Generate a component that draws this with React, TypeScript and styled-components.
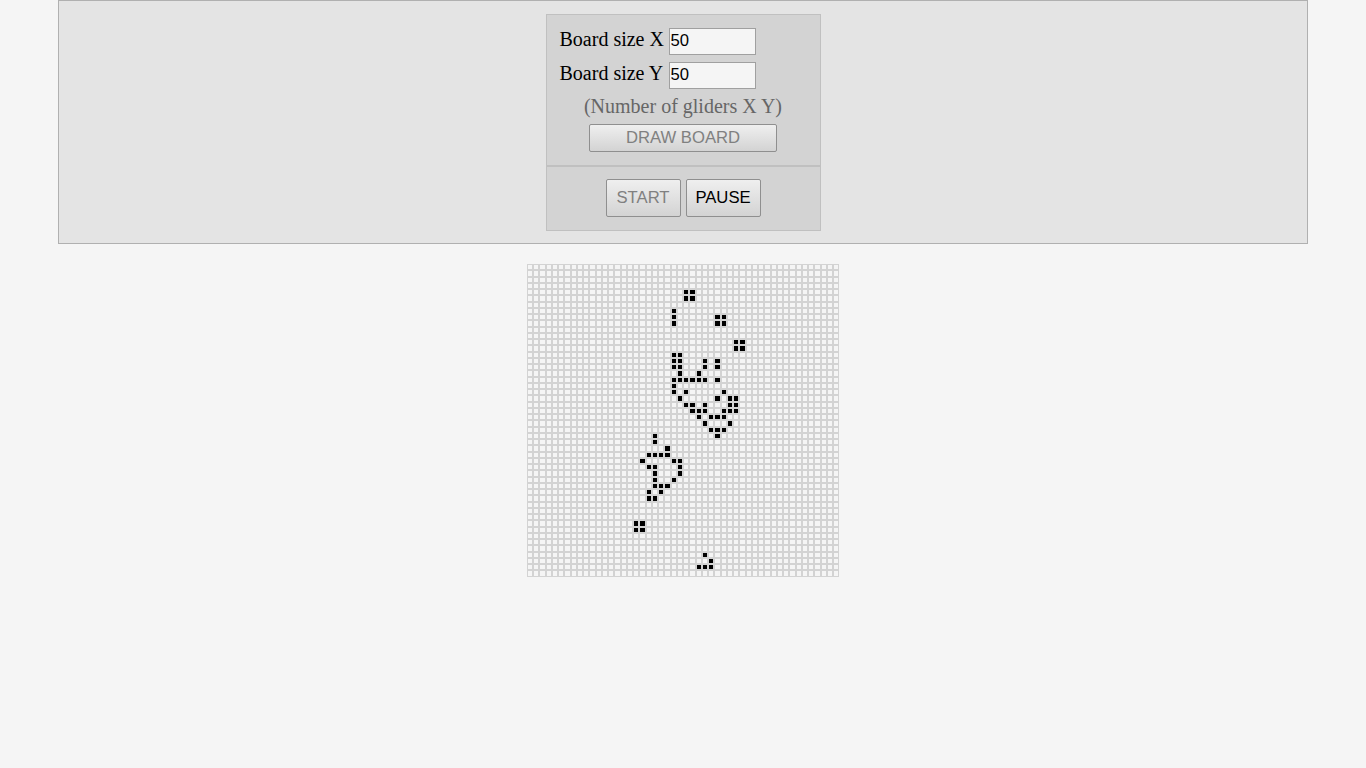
import React, { useState } from "react";
import styled, { createGlobalStyle } from "styled-components";

const SIZE = 50;

/* Row number -> columns of the living cells in that row. */
const LIVE: Record<number, number[]> = {
  4: [25, 26],
  5: [25, 26],
  7: [23],
  8: [23, 30, 31],
  9: [23, 30, 31],
  12: [33, 34],
  13: [33, 34],
  14: [23, 24],
  15: [23, 24, 28, 30],
  16: [23, 24, 28, 30],
  17: [24, 27],
  18: [23, 24, 25, 26, 27, 28, 30],
  19: [23],
  20: [23, 25, 31],
  21: [24, 30, 32, 33],
  22: [25, 26, 28, 32, 33],
  23: [26, 27, 28, 31, 32, 33],
  24: [27, 29, 30, 31],
  25: [28, 32],
  26: [29, 30, 31],
  27: [20, 30],
  28: [20],
  29: [22],
  30: [19, 20, 21, 22],
  31: [18, 23, 24],
  32: [19, 20, 24],
  33: [20, 24],
  34: [20, 23],
  35: [20, 21, 22],
  36: [19, 21],
  37: [19, 20],
  41: [17, 18],
  42: [17, 18],
  46: [28],
  47: [29],
  48: [27, 28, 29],
};

const GlobalStyle = createGlobalStyle`
  *, *::before, *::after {
    box-sizing: border-box;
  }
  body {
    margin: 0;
    background: #f5f5f5;
    color: #000;
    font-family: "Liberation Serif", "Times New Roman", serif;
    font-size: 20px;
  }
`;

const Page = styled.main`
  display: flex;
  flex-direction: column;
  align-items: center;
  gap: 20px;
  width: 100%;
  max-width: 1250px;
  margin: 0 auto;
`;

const Header = styled.header`
  display: flex;
  justify-content: center;
  width: 100%;
  padding: 13px 12px 12px;
  border: 1px solid #b0b0b0;
  background: #e4e4e4;
`;

const Controls = styled.div`
  display: flex;
  flex-direction: column;
  width: 275px;
`;

const SettingsForm = styled.form`
  display: flex;
  flex-direction: column;
  align-items: center;
  gap: 7px;
  padding: 13px;
  border: 1px solid #c0c0c0;
  background: #d3d3d3;
`;

const Field = styled.label`
  display: flex;
  align-self: flex-start;
  gap: 5px;
  line-height: 23px;
`;

const FieldName = styled.span`
  width: 104px;
  white-space: nowrap;
`;

const SizeInput = styled.input`
  width: 87px;
  height: 27px;
  padding: 0 1px 2px;
  border: 1px solid #a0a0a0;
  background: #f5f5f5;
  color: #000;
  font-family: "Liberation Sans", Arial, sans-serif;
  font-size: smaller;
`;

const Note = styled.p`
  margin: 0;
  line-height: 21px;
  color: #666;
`;

const Playback = styled.div`
  display: flex;
  justify-content: center;
  gap: 5px;
  padding: 12px 12px 13px;
  border: 1px solid #c0c0c0;
  background: #d3d3d3;
`;

const Button = styled.button<{ $wide?: boolean }>`
  width: ${({ $wide }) => ($wide ? 188 : 75)}px;
  height: ${({ $wide }) => ($wide ? 28 : 38)}px;
  padding: 0 0 1px;
  border: 1px solid #8f8f8f;
  border-radius: 2px;
  background: linear-gradient(#efefef, #d3d3d3);
  color: #000;
  font-family: "Liberation Sans", Arial, sans-serif;
  font-size: smaller;
  text-transform: uppercase;

  &:disabled {
    color: #808080;
  }
`;

const Board = styled.div`
  display: grid;
  grid-template-columns: repeat(${SIZE}, 1fr);
  grid-template-rows: repeat(${SIZE}, 1fr);
  width: 25%;
  aspect-ratio: 1;
`;

const Cell = styled.div<{ $alive: boolean }>`
  border: 1px solid #d3d3d3;
  background: ${({ $alive }) => ($alive ? "#000" : "#f5f5f5")};
`;

export default function App() {
  const [sizeX, setSizeX] = useState("50");
  const [sizeY, setSizeY] = useState("50");

  return (
    <>
      <GlobalStyle />
      <Page>
        <Header>
          <Controls>
            <SettingsForm onSubmit={(event) => event.preventDefault()}>
              <Field htmlFor="size-x">
                <FieldName>Board size X</FieldName>
                <SizeInput id="size-x" value={sizeX} onChange={(e) => setSizeX(e.target.value)} />
              </Field>
              <Field htmlFor="size-y">
                <FieldName>Board size Y</FieldName>
                <SizeInput id="size-y" value={sizeY} onChange={(e) => setSizeY(e.target.value)} />
              </Field>
              <Note>(Number of gliders X Y)</Note>
              <Button type="submit" $wide disabled>
                Draw board
              </Button>
            </SettingsForm>
            <Playback>
              <Button type="button" disabled>
                Start
              </Button>
              <Button type="button">Pause</Button>
            </Playback>
          </Controls>
        </Header>
        <Board>
          {Array.from({ length: SIZE * SIZE }, (_, i) => {
            const row = Math.floor(i / SIZE);
            return <Cell key={i} $alive={LIVE[row]?.includes(i % SIZE) ?? false} />;
          })}
        </Board>
      </Page>
    </>
  );
}
